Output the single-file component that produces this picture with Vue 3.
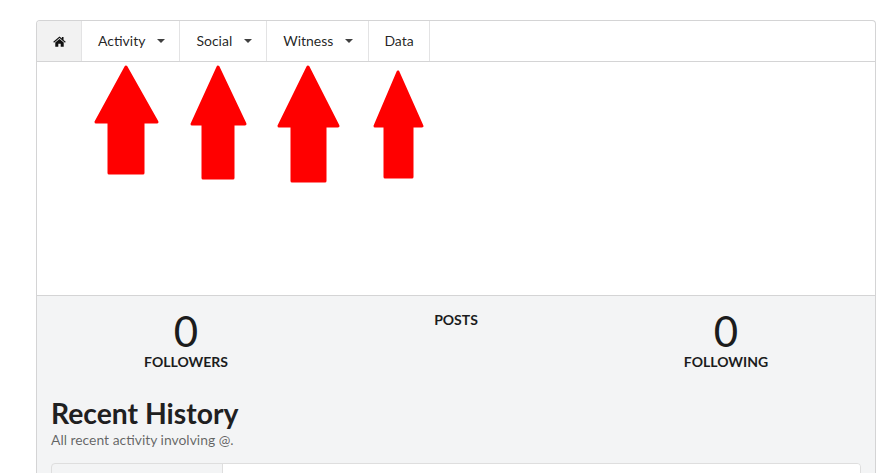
<template>
  <div class="page">
    <div class="card">
      <nav class="menu">
        <a class="item home" aria-label="Home">
          <svg class="home-icon" viewBox="0 0 14 12" width="13" height="11">
            <path d="M7 .6 L9.6 2.8 V1.2 H11.4 V4.3 L13.8 6.4 L13 7.3 L7 2.2 L1 7.3 L.2 6.4 Z" />
            <path d="M2.4 7.2 L7 3.4 L11.6 7.2 V11.6 H8.3 V8.4 H5.7 V11.6 H2.4 Z" />
          </svg>
        </a>
        <a v-for="tab in tabs" :key="tab.label" class="item">
          {{ tab.label }}
          <i v-if="tab.drop" class="caret"></i>
        </a>
      </nav>

      <div class="blank"></div>

      <section class="panel">
        <div class="stats">
          <div class="stat" v-for="stat in stats" :key="stat.label">
            <div v-if="stat.value !== null" class="value">{{ stat.value }}</div>
            <div class="label">{{ stat.label }}</div>
          </div>
        </div>

        <h2 class="title">Recent History</h2>
        <p class="sub">All recent activity involving @.</p>

        <div class="history">
          <div class="side"></div>
          <div class="main"></div>
        </div>
      </section>
    </div>

    <svg class="arrows" width="893" height="473" viewBox="0 0 893 473">
      <path
        v-for="(a, i) in arrows"
        :key="i"
        :d="arrowPath(a)"
        fill="#ff0000"
        stroke="#ff0000"
        stroke-width="3"
        stroke-linejoin="round"
      />
    </svg>
  </div>
</template>

<script setup>
const tabs = [
  { label: 'Activity', drop: true },
  { label: 'Social', drop: true },
  { label: 'Witness', drop: true },
  { label: 'Data', drop: false }
]

const stats = [
  { value: 0, label: 'Followers' },
  { value: null, label: 'Posts' },
  { value: 0, label: 'Following' }
]

// tip x/y, wing left/right/y, shaft left/right, bottom
const arrows = [
  { x: 126, y: 67, wl: 96, wr: 157, wy: 122, sl: 109, sr: 143, b: 173 },
  { x: 218, y: 67, wl: 192, wr: 245, wy: 124, sl: 203, sr: 233, b: 178 },
  { x: 308, y: 67, wl: 279, wr: 338, wy: 126, sl: 292, sr: 325, b: 181 },
  { x: 398, y: 72, wl: 375, wr: 422, wy: 126, sl: 385, sr: 412, b: 177 }
]

function arrowPath(a) {
  return `M${a.x} ${a.y} L${a.wr} ${a.wy} H${a.sr} V${a.b} H${a.sl} V${a.wy} H${a.wl} Z`
}
</script>

<style>
html, body {
  margin: 0;
  overflow: hidden;
  background: #fff;
}
</style>

<style scoped>
.page {
  position: relative;
  height: 473px;
  padding: 20px 17px 0 36px;
  box-sizing: border-box;
  overflow: hidden;
  font-family: Lato, "Open Sans", sans-serif;
  font-size: 14px;
  color: rgba(0, 0, 0, 0.87);
}

.card {
  border: 1px solid #d4d4d5;
  border-bottom: 0;
  border-radius: 4px 4px 0 0;
  background: #fff;
  height: 480px;
  box-sizing: border-box;
  display: flex;
  flex-direction: column;
}

.menu {
  display: flex;
  height: 40px;
  border-bottom: 1px solid #d4d4d5;
  flex: none;
  box-sizing: content-box;
}

.item {
  display: flex;
  align-items: center;
  padding: 0 14px 2px 16px;
  border-right: 1px solid #e3e3e4;
  white-space: nowrap;
}

.item:nth-child(4) {
  padding-right: 15px;
}

.item:nth-child(5) {
  padding-left: 15px;
  padding-right: 15px;
}

.home {
  width: 45px;
  box-sizing: border-box;
  justify-content: center;
  padding: 0;
  background: #f2f2f2;
  border-radius: 3px 0 0 0;
}

.home-icon {
  fill: #111;
}

.caret {
  width: 0;
  height: 0;
  margin-left: 12px;
  margin-top: 2px;
  border-left: 4px solid transparent;
  border-right: 4px solid transparent;
  border-top: 4px solid rgba(0, 0, 0, 0.75);
}

.blank {
  height: 233px;
  flex: none;
  border-bottom: 1px solid #d4d4d5;
}

.panel {
  flex: 1;
  background: #f3f4f5;
  padding: 14px 14px 0;
}

.stats {
  display: grid;
  grid-template-columns: repeat(3, 1fr);
  height: 87px;
}

.stat {
  text-align: center;
}

.value {
  font-size: 42px;
  line-height: 42px;
  font-weight: 400;
  color: #1b1c1d;
}

.label {
  font-size: 14px;
  line-height: 18px;
  font-weight: 700;
  text-transform: uppercase;
  color: #1b1c1d;
  margin-top: 1px;
}

.title {
  margin: 0;
  font-size: 28.3px;
  line-height: 32px;
  font-weight: 700;
  color: #1f2021;
}

.sub {
  margin: 2px 0 0;
  font-size: 13.9px;
  line-height: 18px;
  color: rgba(0, 0, 0, 0.6);
}

.history {
  display: flex;
  height: 60px;
  margin-top: 14px;
  border: 1px solid #dedede;
  border-radius: 4px;
  overflow: hidden;
}

.side {
  width: 170px;
  border-right: 1px solid #dedede;
}

.main {
  flex: 1;
  background: #fff;
}

.arrows {
  position: absolute;
  left: 0;
  top: 0;
  pointer-events: none;
}
</style>
